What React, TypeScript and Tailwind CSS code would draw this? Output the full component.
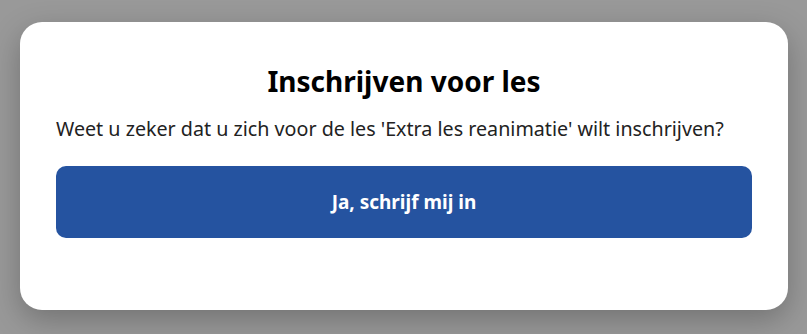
export default function App() {
  return (
    <div
      className="min-h-[334px] bg-[#999999] pl-5 pr-[19px] pt-[22px]"
      style={{ fontFamily: '"Noto Sans", "Open Sans", sans-serif' }}
    >
      <div className="flex h-[288px] flex-col rounded-[22px] bg-white px-9 pt-[41px] shadow-[0_10px_30px_rgba(0,0,0,0.25)]">
        <h2 className="text-center text-[28px] font-bold leading-[36px] text-black">Inschrijven voor les</h2>
        <p className="mt-[15px] text-[19.7px] leading-[30px] text-[#222]">
          Weet u zeker dat u zich voor de les 'Extra les reanimatie' wilt inschrijven?
        </p>
        <button className="mt-[22px] h-[72px] w-full rounded-[10px] bg-[#2553a0] text-[19px] font-bold text-white">
          Ja, schrijf mij in
        </button>
      </div>
    </div>
  );
}
